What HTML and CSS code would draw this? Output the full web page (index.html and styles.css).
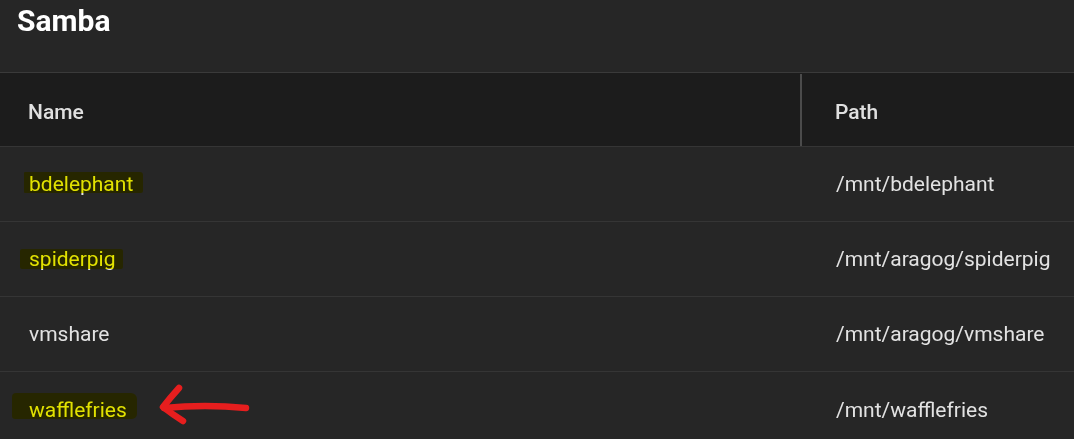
FILE: index.html
```html
<!DOCTYPE html>
<html>
<head>
<meta charset="utf-8">
<link rel="stylesheet" href="styles.css">
</head>
<body>
<div class="page">
  <div class="title-bar"><h1 class="title">Samba</h1></div>
  <div class="table">
    <div class="row head">
      <div class="cell name-col">Name</div>
      <div class="divider"></div>
      <div class="cell path-col">Path</div>
    </div>
    <div class="row">
      <div class="cell name-col"><span class="mark m1"></span>bdelephant</div>
      <div class="gap"></div>
      <div class="cell path-col">/mnt/bdelephant</div>
    </div>
    <div class="row">
      <div class="cell name-col"><span class="mark m2"></span>spiderpig</div>
      <div class="gap"></div>
      <div class="cell path-col">/mnt/aragog/spiderpig</div>
    </div>
    <div class="row">
      <div class="cell name-col">vmshare</div>
      <div class="gap"></div>
      <div class="cell path-col">/mnt/aragog/vmshare</div>
    </div>
    <div class="row last">
      <div class="cell name-col"><span class="mark m3"></span>wafflefries
        <svg class="arrow" width="100" height="45" viewBox="0 0 100 45">
          <path d="M91 25 Q50 21 9 25" />
          <path d="M24 5 Q15 15 8 24 Q17 31 28 38" />
        </svg>
      </div>
      <div class="gap"></div>
      <div class="cell path-col">/mnt/wafflefries</div>
    </div>
  </div>
</div>
</body>
</html>
```

FILE: styles.css
```css
html, body {
  margin: 0;
  padding: 0;
  background: #262626;
}
.page {
  width: 1074px;
  height: 439px;
  overflow: hidden;
  font-family: Roboto, "Liberation Sans", sans-serif;
  background: #262626;
}
.title-bar {
  border-bottom: 1px solid #3a3a3a;
  box-sizing: border-box;
  height: 73px;
  padding-left: 17px;
}
.title {
  margin: 0;
  padding-top: 3px;
  font-size: 30px;
  font-weight: 700;
  color: #ffffff;
  line-height: 36px;
}
.table {
  display: flex;
  flex-direction: column;
}
.row {
  display: flex;
  height: 75px;
  box-sizing: border-box;
  border-bottom: 1px solid #353535;
  align-items: center;
}
.row.head {
  height: 74px;
  background: #1c1c1c;
  border-bottom: 1px solid #353535;
  align-items: stretch;
}
.row.last { border-bottom: none; }
.cell {
  font-size: 21px;
  color: #e2e2e2;
  position: relative;
}
.head .cell {
  font-weight: 500;
  color: #e0e0e0;
  display: flex;
  align-items: center;
  padding-top: 5px;
  box-sizing: border-box;
}
.name-col {
  width: 800px;
  padding-left: 29px;
  box-sizing: border-box;
  height: 100%;
  display: flex;
  align-items: center;
}
.head .name-col { padding-left: 28px; }
.divider {
  width: 2px;
  background: #4b4b4b;
  margin: 1px 0 0 0;
}
.gap { width: 2px; }
.path-col {
  padding-left: 34px;
}
.head .path-col { padding-left: 33px; }
.mark {
  position: absolute;
  background: #ffff00;
  mix-blend-mode: multiply;
  pointer-events: none;
}
.m1 { left: 24px; width: 119px; top: 25px; height: 21px; border-radius: 1px 3px 2px 1px; }
.m2 { left: 20px; width: 103px; top: 27px; height: 20px; border-radius: 2px; }
.m3 { left: 12px; width: 125px; top: 21px; height: 26px; border-radius: 4px 6px 5px 3px; }
.arrow {
  position: absolute;
  left: 155px;
  top: 11px;
  fill: none;
  stroke: #e61e1e;
  stroke-width: 6.5;
  stroke-linecap: round;
  stroke-linejoin: round;
}
```
